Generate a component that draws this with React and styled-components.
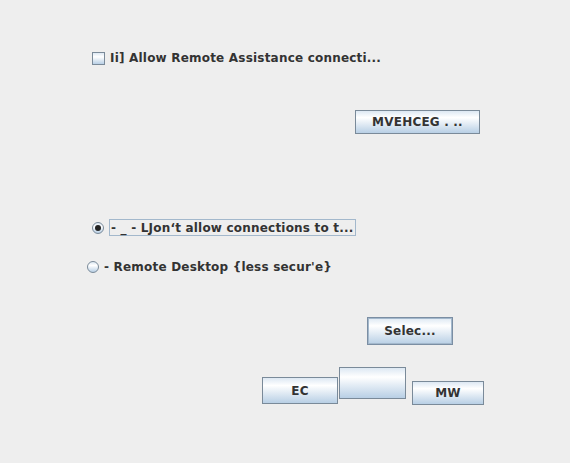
import styled, { createGlobalStyle } from "styled-components";

const GlobalStyle = createGlobalStyle`
  html, body {
    margin: 0;
    padding: 0;
    background: #eeeeee;
  }
  body {
    font-family: "DejaVu Sans", "Liberation Sans", sans-serif;
    font-weight: bold;
    font-size: 12px;
    letter-spacing: 0.2px;
    color: #333333;
  }
`;

const Canvas = styled.div`
  width: 570px;
  height: 463px;
  display: flex;
  flex-direction: column;
  overflow: hidden;
`;

const Row = styled.div`
  display: flex;
  align-items: ${(props) => props.$align || "center"};
  margin-top: ${(props) => props.$top}px;
  padding-left: ${(props) => props.$left}px;
  height: ${(props) => props.$height}px;
`;

const Label = styled.span`
  white-space: nowrap;
  line-height: 13px;
  margin-left: ${(props) => props.$gap || 0}px;
`;

const CheckBox = styled.span`
  width: 11px;
  height: 11px;
  border: 1px solid #7a8a99;
  background: linear-gradient(180deg, #dde8f3 0%, #ffffff 35%, #b8cfe5 100%);
  flex-shrink: 0;
`;

const Radio = styled.span`
  position: relative;
  width: 10px;
  height: 10px;
  border-radius: 50%;
  border: 1px solid #7a8a99;
  background: linear-gradient(180deg, #dde8f3 0%, #ffffff 35%, #b8cfe5 100%);
  flex-shrink: 0;

  &::after {
    content: "";
    display: ${(props) => (props.$checked ? "block" : "none")};
    position: absolute;
    left: 2px;
    top: 2px;
    width: 6px;
    height: 6px;
    border-radius: 50%;
    background: #222;
  }
`;

const FocusBox = styled.span`
  display: flex;
  align-items: center;
  height: 15px;
  padding: 0 1px 0 1px;
  border: 1px solid #a3b8cc;
  margin-left: 5px;
  white-space: nowrap;
`;

const Button = styled.div`
  box-sizing: border-box;
  display: flex;
  align-items: center;
  justify-content: center;
  width: ${(props) => props.$w}px;
  height: ${(props) => props.$h}px;
  margin-top: ${(props) => props.$top || 0}px;
  margin-left: ${(props) => props.$gap || 0}px;
  border: 1px solid #7a8a99;
  background: linear-gradient(180deg, #dde8f3 0%, #ffffff 30%, #b8cfe5 100%);
  box-shadow: ${(props) =>
    props.$focused ? "inset 0 0 0 1px #a3b8cc" : "none"};
  border-color: ${(props) => (props.$focused ? "#7b8ea3" : "#7a8a99")};
  white-space: nowrap;
  flex-shrink: 0;
`;

export default function App() {
  return (
    <Canvas>
      <GlobalStyle />
      <Row $top={52} $left={92} $height={13}>
        <CheckBox />
        <Label $gap={5}>Ii] Allow Remote Assistance connecti...</Label>
      </Row>
      <Row $top={45} $left={355} $height={24}>
        <Button $w={125} $h={24}>MVEHCEG . ..</Button>
      </Row>
      <Row $top={85} $left={92} $height={17}>
        <Radio $checked />
        <FocusBox>- _ - LJon‘t allow connections to t...</FocusBox>
      </Row>
      <Row $top={24} $left={87} $height={14}>
        <Radio />
        <Label $gap={5}>- Remote Desktop {"{"}less secur'e{"}"}</Label>
      </Row>
      <Row $top={43} $left={367} $height={28}>
        <Button $w={86} $h={28} $focused>
          Selec...
        </Button>
      </Row>
      <Row $top={22} $left={262} $height={38} $align="flex-start">
        <Button $w={76} $h={27} $top={10}>
          EC
        </Button>
        <Button $w={67} $h={32} $gap={1} />
        <Button $w={72} $h={24} $top={14} $gap={6}>
          MW
        </Button>
      </Row>
    </Canvas>
  );
}
